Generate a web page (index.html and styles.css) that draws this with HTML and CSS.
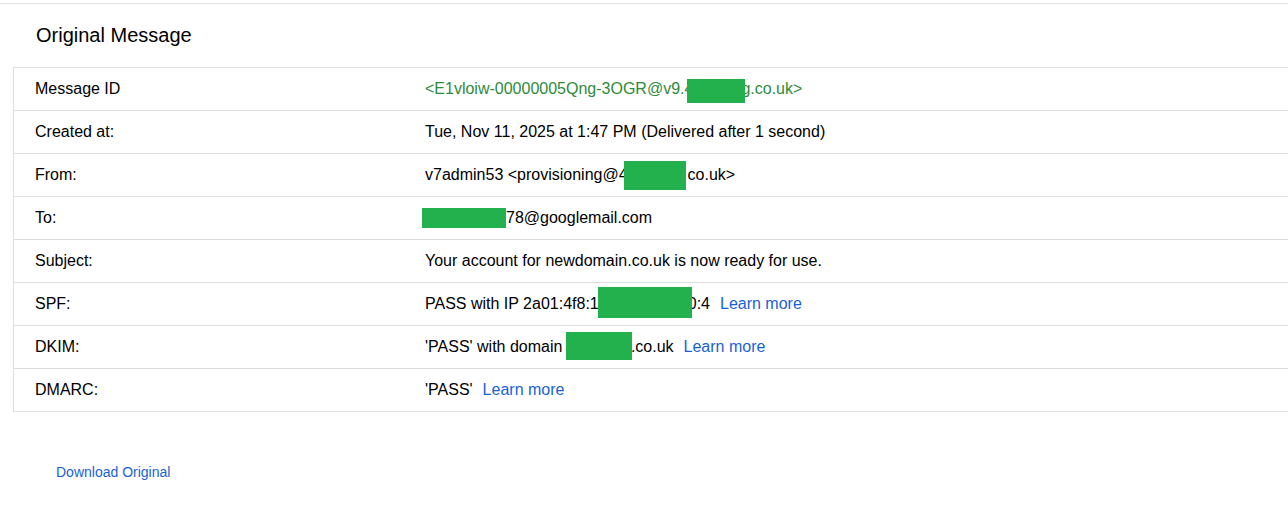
FILE: index.html
```html
<!DOCTYPE html>
<html>
<head>
<meta charset="utf-8">
<link rel="stylesheet" href="styles.css">
</head>
<body>
<div class="page">
  <div class="header">
    <h1 class="title">Original Message</h1>
  </div>
  <div class="table">
    <div class="row">
      <div class="label">Message ID</div>
      <div class="value msgid">&lt;E1vloiw-00000005Qng-3OGR@v9.4<span class="redact r-id"></span>g.co.uk&gt;</div>
    </div>
    <div class="row">
      <div class="label">Created at:</div>
      <div class="value">Tue, Nov 11, 2025 at 1:47 PM (Delivered after 1 second)</div>
    </div>
    <div class="row">
      <div class="label">From:</div>
      <div class="value">v7admin53 &lt;provisioning@4<span class="redact r-from"></span>co.uk&gt;</div>
    </div>
    <div class="row">
      <div class="label">To:</div>
      <div class="value"><span class="redact r-to"></span>78@googlemail.com</div>
    </div>
    <div class="row">
      <div class="label">Subject:</div>
      <div class="value">Your account for newdomain.co.uk is now ready for use.</div>
    </div>
    <div class="row">
      <div class="label">SPF:</div>
      <div class="value">PASS with IP 2a01:4f8:1<span class="redact r-spf"></span>0:4<a class="learn" href="#">Learn more</a></div>
    </div>
    <div class="row">
      <div class="label">DKIM:</div>
      <div class="value">'PASS' with domain <span class="redact r-dkim"></span>.co.uk<a class="learn" href="#">Learn more</a></div>
    </div>
    <div class="row">
      <div class="label">DMARC:</div>
      <div class="value">'PASS'<a class="learn" href="#">Learn more</a></div>
    </div>
  </div>
  <div class="footer">
    <a class="download" href="#">Download Original</a>
  </div>
</div>
</body>
</html>
```

FILE: styles.css
```css
html, body {
  margin: 0;
  padding: 0;
  background: #fff;
  overflow: hidden;
}

body {
  font-family: "Liberation Sans", Arial, sans-serif;
  color: #000;
}

.page {
  width: 1288px;
  height: 508px;
  overflow: hidden;
  padding-top: 3px;
  box-sizing: border-box;
}

.header {
  border-top: 1px solid #e0e0e0;
  padding: 19px 0 20px 36px;
}

.title {
  margin: 0;
  font-size: 20px;
  line-height: 24px;
  font-weight: normal;
  color: #000;
}

.table {
  margin-left: 13px;
  width: 1300px;
  border: 1px solid #dedede;
}

.row {
  display: grid;
  grid-template-columns: 411px 1fr;
  height: 42px;
  align-items: center;
  border-top: 1px solid #dedede;
  font-size: 16px;
  line-height: 18px;
}

.row:first-child {
  border-top: none;
}

.label {
  padding-left: 21px;
  color: #000;
}

.value {
  white-space: nowrap;
  color: #000;
}

.msgid {
  color: #2e8b3c;
}

.learn {
  color: #1a62d6;
  text-decoration: none;
  margin-left: 10px;
}

.redact {
  position: relative;
  display: inline-block;
  background: #22b14c;
  vertical-align: baseline;
}

.r-id {
  width: 58px;
  height: 24px;
  margin: -15px -4px -9px -6px;
}

.r-from {
  width: 62px;
  height: 29px;
  margin: -19px 2px -10px -4px;
}

.r-to {
  width: 84px;
  height: 20px;
  margin: -15px 0 -5px -3px;
}

.r-spf {
  width: 94px;
  height: 31px;
  margin: -22px -4px -9px -1px;
}

.r-dkim {
  width: 66px;
  height: 28px;
  margin: -20px -1px -8px -1px;
}

.footer {
  padding: 51px 0 0 56px;
}

.download {
  font-size: 14px;
  line-height: 16px;
  color: #1a62d6;
  text-decoration: none;
}
```
